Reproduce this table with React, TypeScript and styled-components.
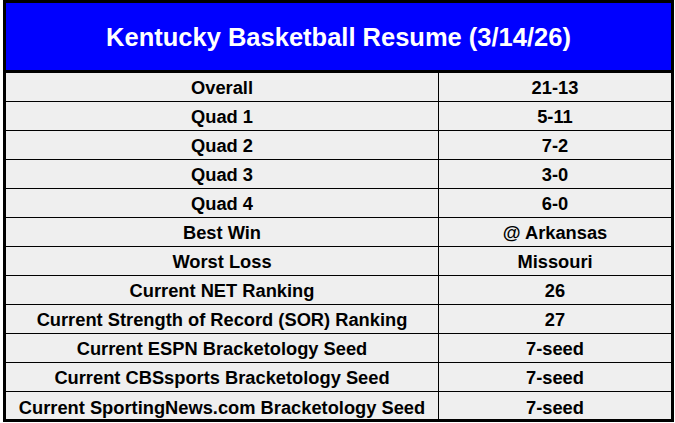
import React from "react";
import styled, { createGlobalStyle } from "styled-components";

const Global = createGlobalStyle`
  html, body { margin: 0; padding: 0; background: #ffffff; }
  body { font-family: "Liberation Sans", Arial, sans-serif; }
`;

const Page = styled.div`
  padding-left: 3px;
  width: 675px;
  height: 423px;
  box-sizing: border-box;
`;

const Card = styled.div`
  width: 671px;
  height: 422px;
  box-sizing: border-box;
  border: 3px solid #000;
  display: flex;
  flex-direction: column;
  background: #efefef;
`;

const Header = styled.div`
  height: 70px;
  flex: none;
  background: #0000ff;
  border-bottom: 3px solid #000;
  display: flex;
  align-items: center;
  justify-content: center;
  color: #fff;
  font-weight: bold;
  font-size: 25.5px;
  padding-top: 2px;
  box-sizing: border-box;
`;

const Table = styled.div`
  flex: 1;
  display: grid;
  grid-template-columns: 433px 1fr;
  grid-auto-rows: 29px;
`;

const Cell = styled.div<{ $last?: boolean; $right?: boolean }>`
  display: flex;
  align-items: center;
  justify-content: center;
  font-weight: bold;
  font-size: 18.3px;
  color: #000;
  box-sizing: border-box;
  border-bottom: ${(p) => (p.$last ? "none" : "1px solid #000")};
  border-right: ${(p) => (p.$right ? "none" : "1px solid #000")};
  padding-top: 2px;
`;

const rows: [string, string][] = [
  ["Overall", "21-13"],
  ["Quad 1", "5-11"],
  ["Quad 2", "7-2"],
  ["Quad 3", "3-0"],
  ["Quad 4", "6-0"],
  ["Best Win", "@ Arkansas"],
  ["Worst Loss", "Missouri"],
  ["Current NET Ranking", "26"],
  ["Current Strength of Record (SOR) Ranking", "27"],
  ["Current ESPN Bracketology Seed", "7-seed"],
  ["Current CBSsports Bracketology Seed", "7-seed"],
  ["Current SportingNews.com Bracketology Seed", "7-seed"],
];

export default function App() {
  return (
    <Page>
      <Global />
      <Card>
        <Header>Kentucky Basketball Resume (3/14/26)</Header>
        <Table>
          {rows.map(([k, v], i) => {
            const last = i === rows.length - 1;
            return (
              <React.Fragment key={k}>
                <Cell $last={last}>{k}</Cell>
                <Cell $last={last} $right>
                  {v}
                </Cell>
              </React.Fragment>
            );
          })}
        </Table>
      </Card>
    </Page>
  );
}
